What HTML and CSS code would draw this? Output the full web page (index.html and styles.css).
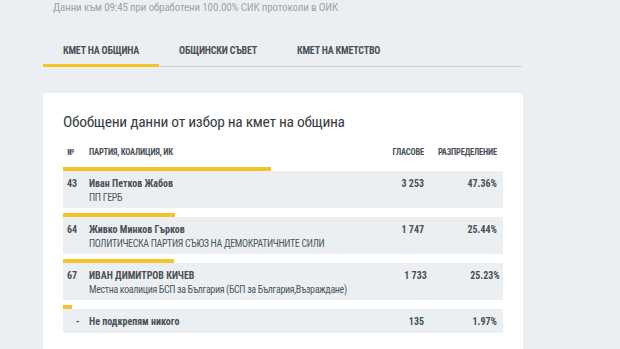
FILE: index.html
```html
<!DOCTYPE html>
<html lang="bg">
<head>
  <meta charset="UTF-8">
  <meta name="viewport" content="width=device-width, initial-scale=1.0">
  <title>Кмет на община</title>
  <link rel="stylesheet" href="styles.css">
</head>
<body>
  <div class="status">Данни към 09:45 при обработени 100.00% СИК протоколи в ОИК</div>

  <div class="tabs">
    <div class="tab active">КМЕТ НА ОБЩИНА</div>
    <div class="tab">ОБЩИНСКИ СЪВЕТ</div>
    <div class="tab">КМЕТ НА КМЕТСТВО</div>
  </div>

  <div class="card">
    <h2 class="title">Обобщени данни от избор на кмет на община</h2>

    <div class="table">
      <div class="head">
        <div>№</div>
        <div>ПАРТИЯ, КОАЛИЦИЯ, ИК</div>
        <div class="num">ГЛАСОВЕ</div>
        <div class="num">РАЗПРЕДЕЛЕНИЕ</div>
      </div>

      <div class="entry">
        <div class="bar" style="width: 47.36%"></div>
        <div class="row">
          <div class="no">43</div>
          <div>
            <div class="name">Иван Петков Жабов</div>
            <div class="party">ПП ГЕРБ</div>
          </div>
          <div class="num">3 253</div>
          <div class="num">47.36%</div>
        </div>
      </div>

      <div class="entry">
        <div class="bar" style="width: 25.44%"></div>
        <div class="row">
          <div class="no">64</div>
          <div>
            <div class="name">Живко Минков Гърков</div>
            <div class="party">ПОЛИТИЧЕСКА ПАРТИЯ СЪЮЗ НА ДЕМОКРАТИЧНИТЕ СИЛИ</div>
          </div>
          <div class="num">1 747</div>
          <div class="num">25.44%</div>
        </div>
      </div>

      <div class="entry">
        <div class="bar" style="width: 25.23%"></div>
        <div class="row">
          <div class="no">67</div>
          <div>
            <div class="name">ИВАН ДИМИТРОВ КИЧЕВ</div>
            <div class="party">Местна коалиция БСП за България (БСП за България,Възраждане)</div>
          </div>
          <div class="num">1 733</div>
          <div class="num">25.23%</div>
        </div>
      </div>

      <div class="entry">
        <div class="bar" style="width: 1.97%"></div>
        <div class="row">
          <div class="no dash">-</div>
          <div>
            <div class="name">Не подкрепям никого</div>
          </div>
          <div class="num">135</div>
          <div class="num">1.97%</div>
        </div>
      </div>
    </div>
  </div>
</body>
</html>
```

FILE: styles.css
```css
body {
  margin: 0;
  padding: 0;
  background-color: #eceff1;
  font-family: "Roboto Condensed", Roboto, "Liberation Sans", sans-serif;
  font-stretch: condensed;
  color: #4a5157;
}

.status {
  padding-left: 53px;
  font-size: 11px;
  line-height: 16px;
  color: #9aa4ab;
  letter-spacing: -0.15px;
}

.tabs {
  display: flex;
  width: 479px;
  margin: 20px 0 0 43px;
  border-bottom: 1px solid #cfd3d6;
}

.tab {
  padding: 2px 20px 0;
  line-height: 26px;
  font-size: 10px;
  font-weight: bold;
  color: #4a5157;
  border-bottom: 3px solid transparent;
  margin-bottom: -1px;
  letter-spacing: -0.2px;
}

.tab.active {
  border-bottom-color: #f5c229; /* жълта линия */
}

.card {
  width: 440px;
  margin: 26px 0 0 43px;
  padding: 19px 20px 20px;
  background-color: #fff;
  border-radius: 4px;
}

.title {
  margin: 0;
  font-size: 15.5px;
  line-height: 20px;
  font-weight: normal;
  color: #373d42;
  letter-spacing: -0.3px;
}

.head,
.row {
  display: grid;
  grid-template-columns: 22px 1fr 80px 73px;
  padding: 0 6px 0 4px;
}

.head {
  margin-top: 13px;
  margin-bottom: 8px;
  font-size: 8.5px;
  line-height: 14px;
  font-weight: bold;
  letter-spacing: -0.2px;
}

.num {
  text-align: right;
}

.entry {
  margin-bottom: 5px;
}

.bar {
  height: 4px;
  background-color: #f5c229;
}

.row {
  background-color: #eceff1;
  padding-top: 6px;
  padding-bottom: 3px;
  font-size: 10px;
  line-height: 14px;
}

.row .num,
.row .no,
.name {
  font-weight: bold;
}

.name {
  color: #4a5157;
}

.party {
  color: #4f575d;
  letter-spacing: -0.35px;
  white-space: nowrap;
}

.dash {
  padding-left: 9px;
}

.entry:last-child .row {
  padding-bottom: 4px;
}
```
